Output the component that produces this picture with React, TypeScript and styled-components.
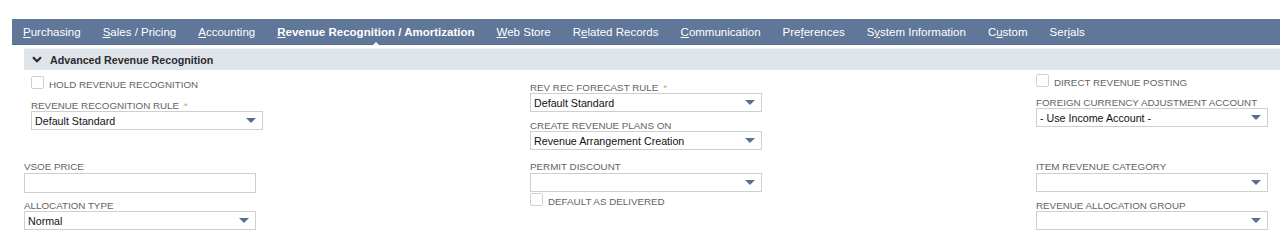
import { FunctionComponent, ReactElement } from 'react'
import styled, { createGlobalStyle } from 'styled-components'

const GlobalStyle = createGlobalStyle`
  body {
    margin: 0;
    background: #fff;
    font-family: "Liberation Sans", Arial, sans-serif;
  }
`

const Page = styled.div`
  padding-top: 19px;
  width: 1280px;
`

const TabBar = styled.div`
  margin-left: 12px;
  height: 26px;
  display: flex;
  align-items: center;
  background-color: #607799;
  border-bottom: 1px solid #566c8d;
  box-sizing: border-box;
`

const Tab = styled.div<{ $active?: boolean }>`
  position: relative;
  padding: 0 11px;
  height: 26px;
  line-height: 27px;
  color: #fff;
  font-size: 11.52px;
  font-weight: ${props => (props.$active ? 'bold' : 'normal')};
  white-space: nowrap;

  u {
    text-decoration: underline;
    text-underline-offset: 1px;
  }

  &::after {
    content: '';
    display: ${props => (props.$active ? 'block' : 'none')};
    position: absolute;
    left: 50%;
    bottom: -1px;
    margin-left: -4px;
    border-left: 4px solid transparent;
    border-right: 4px solid transparent;
    border-bottom: 4px solid #fff;
  }
`

const SectionHeader = styled.div`
  margin: 3px 0 0 24px;
  height: 22px;
  box-sizing: border-box;
  border-top: 1px solid #eef1f5;
  background-color: #dfe3ea;
  display: flex;
  align-items: center;
  gap: 8px;
  padding-left: 8px;
  color: #2b2b2b;
  font-size: 10.7px;
  font-weight: bold;
`

const FormGrid = styled.div`
  margin-left: 24px;
  display: grid;
  grid-template-columns: 506px 506px 232px;
  row-gap: 10px;
`

const Column = styled.div<{ $top: number; $indent?: number }>`
  display: flex;
  flex-direction: column;
  align-items: flex-start;
  padding-top: ${props => props.$top}px;
  padding-left: ${props => props.$indent ?? 0}px;
`

const Label = styled.div<{ $gap?: number }>`
  margin-top: ${props => props.$gap ?? 0}px;
  height: 12px;
  line-height: 14px;
  font-size: 9.8px;
  color: #636363;
  text-transform: uppercase;
  white-space: nowrap;
`

const Required = styled.span`
  color: #e0a030;
  margin-left: 5px;
`

const SelectBox = styled.div<{ $gap?: number }>`
  margin-top: ${props => props.$gap ?? 0}px;
  width: 232px;
  height: 19px;
  box-sizing: border-box;
  border: 1px solid #cfcfcf;
  background: #fff;
  display: flex;
  align-items: center;
  justify-content: space-between;
  padding: 0 6px 0 3px;
  font-size: 10.7px;
  color: #111;
`

const TextInput = styled.div<{ $gap?: number }>`
  margin-top: ${props => props.$gap ?? 0}px;
  width: 232px;
  height: 20px;
  box-sizing: border-box;
  border: 1px solid #cfcfcf;
  background: #fff;
`

const CheckRow = styled.div<{ $gap?: number }>`
  margin-top: ${props => props.$gap ?? 0}px;
  display: flex;
  align-items: flex-end;
  gap: 5px;
  font-size: 9.8px;
  line-height: 8px;
  color: #636363;
  text-transform: uppercase;
`

const CheckBox = styled.span`
  width: 13px;
  height: 13px;
  box-sizing: border-box;
  border: 1px solid #d0d0d0;
  border-radius: 2px;
  background: #fff;
`

const Chevron = () => (
  <svg width="10" height="7" viewBox="0 0 10 7">
    <path d="M1 1.2 L5 5.2 L9 1.2" fill="none" stroke="#2b2b2b" strokeWidth="2.2" />
  </svg>
)

const Arrow = () => (
  <svg width="10" height="5" viewBox="0 0 10 5">
    <polygon points="0,0 10,0 5,5" fill="#5a6f8f" />
  </svg>
)

interface SelectProps {
  value?: string;
  gap?: number;
}

const Select: FunctionComponent<SelectProps> = ({ value, gap }): ReactElement => (
  <SelectBox $gap={gap}>
    <span>{value}</span>
    <Arrow />
  </SelectBox>
)

const Check: FunctionComponent<{ text: string; gap?: number }> = ({ text, gap }): ReactElement => (
  <CheckRow $gap={gap}>
    <CheckBox />
    <span>{text}</span>
  </CheckRow>
)

const tabs: { pre: string; key: string; post: string; active?: boolean }[] = [
  { pre: '', key: 'P', post: 'urchasing' },
  { pre: '', key: 'S', post: 'ales / Pricing' },
  { pre: '', key: 'A', post: 'ccounting' },
  { pre: '', key: 'R', post: 'evenue Recognition / Amortization', active: true },
  { pre: '', key: 'W', post: 'eb Store' },
  { pre: 'R', key: 'e', post: 'lated Records' },
  { pre: '', key: 'C', post: 'ommunication' },
  { pre: 'Pre', key: 'f', post: 'erences' },
  { pre: 'S', key: 'y', post: 'stem Information' },
  { pre: 'C', key: 'u', post: 'stom' },
  { pre: 'Ser', key: 'i', post: 'als' },
]

const App = (): ReactElement => (
  <Page>
    <GlobalStyle />
    <TabBar>
      {tabs.map(t => (
        <Tab key={t.pre + t.key + t.post} $active={t.active}>
          {t.pre}<u>{t.key}</u>{t.post}
        </Tab>
      ))}
    </TabBar>

    <SectionHeader>
      <Chevron />
      <span>Advanced Revenue Recognition</span>
    </SectionHeader>

    <FormGrid>
      <Column $top={6} $indent={7}>
        <Check text="Hold Revenue Recognition" />
        <Label $gap={10}>Revenue Recognition Rule<Required>*</Required></Label>
        <Select value="Default Standard" />
      </Column>
      <Column $top={11}>
        <Label>Rev Rec Forecast Rule<Required>*</Required></Label>
        <Select value="Default Standard" />
        <Label $gap={7}>Create Revenue Plans On</Label>
        <Select value="Revenue Arrangement Creation" />
      </Column>
      <Column $top={4}>
        <Check text="Direct Revenue Posting" />
        <Label $gap={9}>Foreign Currency Adjustment Account</Label>
        <Select value="- Use Income Account -" />
      </Column>

      <Column $top={0}>
        <Label>VSOE Price</Label>
        <TextInput $gap={1} />
        <Label $gap={6}>Allocation Type</Label>
        <Select value="Normal" />
      </Column>
      <Column $top={0}>
        <Label>Permit Discount</Label>
        <Select gap={1} />
        <Check text="Default as Delivered" gap={1} />
      </Column>
      <Column $top={0}>
        <Label>Item Revenue Category</Label>
        <Select gap={1} />
        <Label $gap={7}>Revenue Allocation Group</Label>
        <Select />
      </Column>
    </FormGrid>
  </Page>
)

export default App
